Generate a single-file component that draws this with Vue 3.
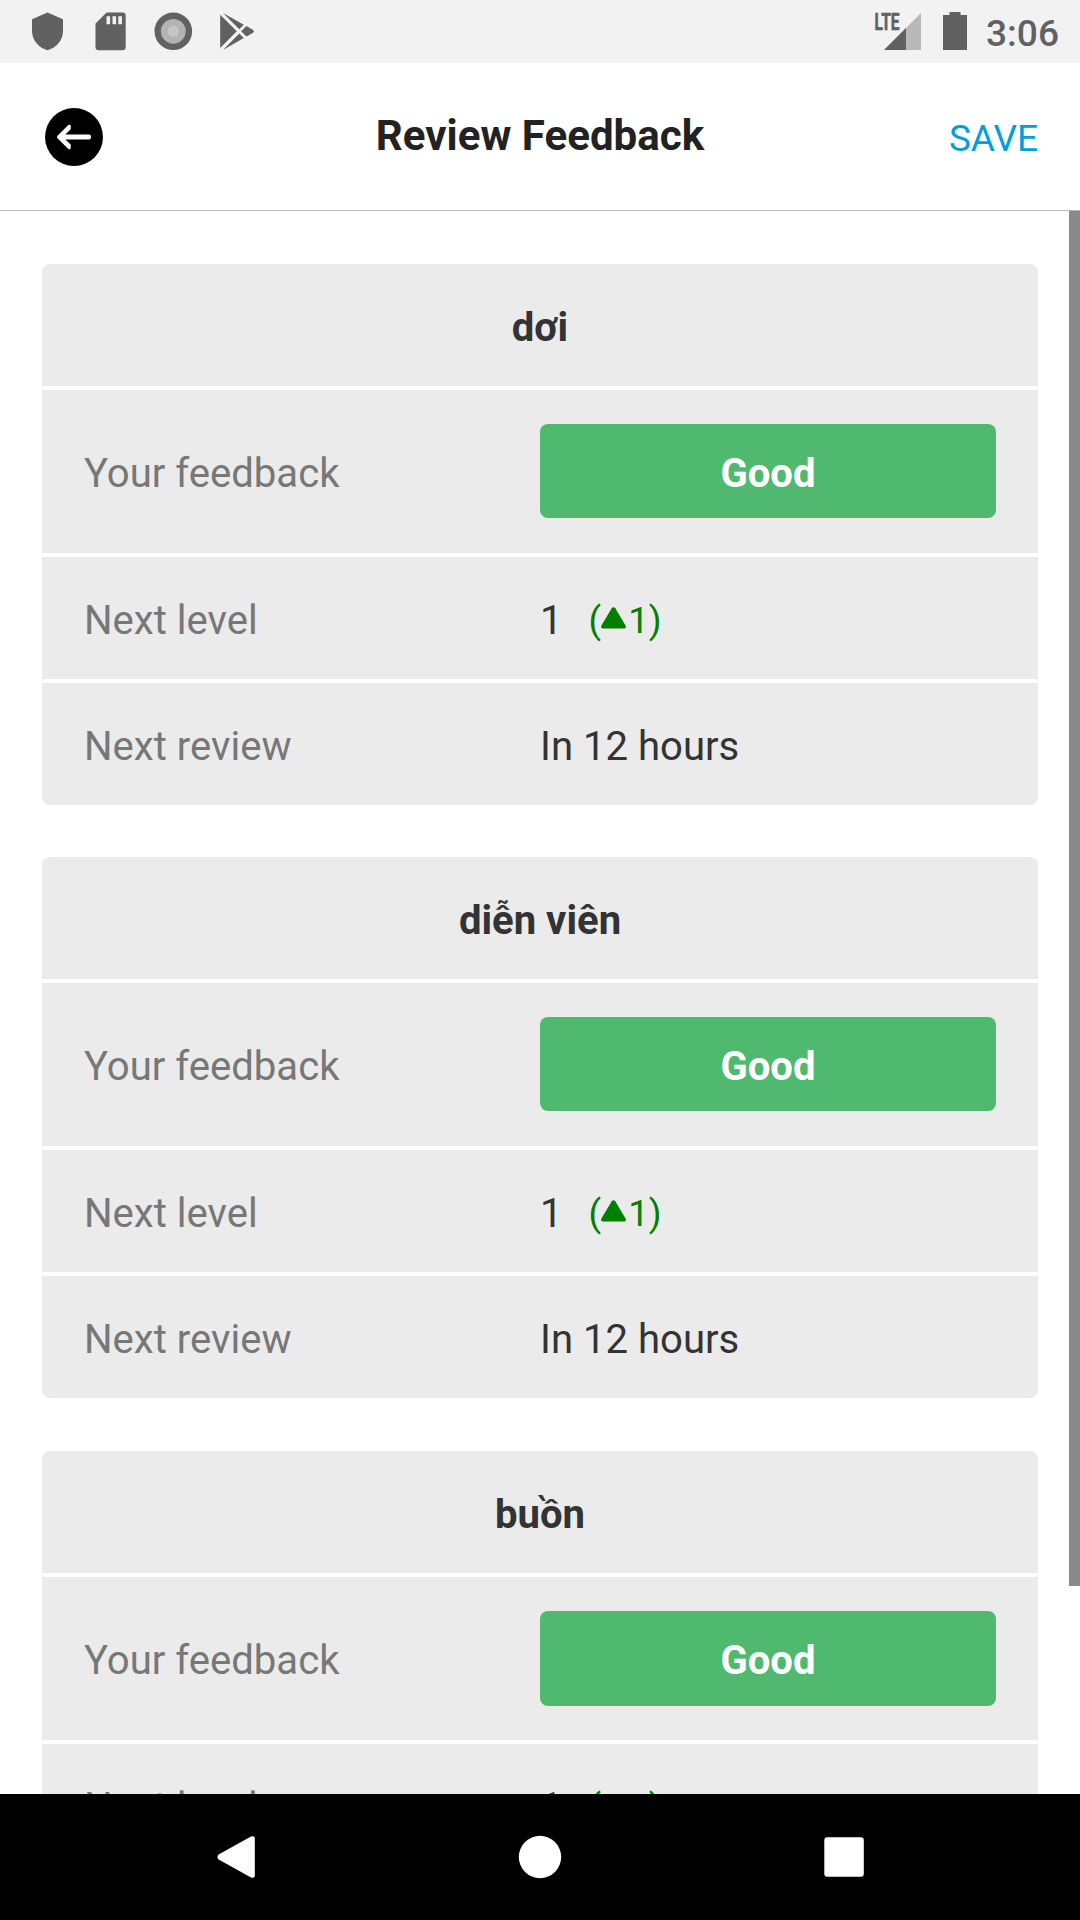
<script setup>
const cards = [
  { word: 'dơi', feedback: 'Good', level: 1, gain: 1, next: 'In 12 hours' },
  { word: 'diễn viên', feedback: 'Good', level: 1, gain: 1, next: 'In 12 hours' },
  { word: 'buồn', feedback: 'Good', level: 1, gain: 1, next: 'In 12 hours' },
]
</script>

<template>
  <div class="screen">
    <div class="status">
      <svg class="notifications" width="270" height="63" viewBox="0 0 270 63" fill="#616161">
        <path d="M47.5 12.5 63 19.3V31c0 9-6.500 16.800-15.500 19.300C38.500 47.800 32 40 32 31V19.300z" />
        <path fill-rule="evenodd" d="M106.500 12.500H122.500a3.200 3.200 0 0 1 3.200 3.200V47a3.200 3.200 0 0 1-3.200 3.200H98.700a3.200 3.200 0 0 1-3.200-3.200V23.500zM106.500 16.300v7.900h3.600v-7.900zM112.500 16.300v7.900h3.600v-7.900zM118.300 16.300v7.900h3.600v-7.900z" />
        <circle cx="173.300" cy="31.300" r="18.800" />
        <circle cx="173.300" cy="31.300" r="12.400" fill="#b3b3b3" />
        <circle cx="173.300" cy="31.300" r="5.700" fill="#c6c6c6" />
        <path d="M220.200 14.700 236.800 31.300 220.200 48z" />
        <path d="M223 12.900 243.800 24.700 239.300 29.300z" />
        <path d="M223 49.900 243.800 38 239.300 33.400z" />
        <path d="M246.400 26.100 252.800 29.800q2.200 1.500 0 3.100L246.400 36.600 241.200 31.300z" />
      </svg>
      <div class="system">
        <svg width="110" height="63" viewBox="870 0 110 63" fill="#616161">
          <path d="M921 13V50H884z" fill="#b9b9b9" />
          <path d="M906 28V50H884z" />
          <text x="874.500" y="30" class="lte" textLength="25" lengthAdjust="spacingAndGlyphs">LTE</text>
          <path d="M949.500 12H960.500V15H967V50H943V15H949.500z" />
        </svg>
        <span class="clock">3:06</span>
      </div>
    </div>

    <header class="header">
      <div class="side">
        <svg class="back" width="58" height="58" viewBox="0 0 58 58">
          <circle cx="29" cy="29" r="29" />
          <path fill="#fff" d="M12.500 27.700 23.300 17.100Q25.600 16.200 25.700 18V21.300L20.400 26.500H44.300Q46.100 26.700 46.100 29T44.300 31.500H20.400L25.700 36.600V40Q25.600 41.800 23.300 40.900L12.500 30.300Q11.300 29 12.500 27.700z" />
        </svg>
      </div>
      <h1 class="title">Review Feedback</h1>
      <div class="side end"><span class="save">SAVE</span></div>
    </header>

    <main class="content">
      <div class="list">
        <section v-for="card in cards" :key="card.word" class="card">
          <div class="row word">{{ card.word }}</div>
          <div class="row tall">
            <span class="label">Your feedback</span>
            <span class="button">{{ card.feedback }}</span>
          </div>
          <div class="row">
            <span class="label">Next level</span>
            <span class="value">
              {{ card.level }}
              <span class="gain">
                <span>(</span>
                <svg width="25" height="26" viewBox="0 0 25 26"><path d="M10.700 1.200Q12.500-.8 14.300 1.200L24.700 18.800Q25.500 21.300 23.300 21.500H1.700Q-.5 21.300.3 18.800z" /></svg>
                <span>{{ card.gain }})</span>
              </span>
            </span>
          </div>
          <div class="row">
            <span class="label">Next review</span>
            <span class="value">{{ card.next }}</span>
          </div>
        </section>
      </div>
      <div class="track"><div class="thumb"></div></div>
    </main>

    <nav class="nav">
      <svg width="304" height="126" viewBox="0 0 304 126"><path d="M134.200 60.700 167 42.600Q170.800 41.300 170.800 44.500V81.500Q170.800 84.700 167 83.400L134.200 65.300Q132.500 63 134.200 60.700z" /></svg>
      <svg width="304" height="126" viewBox="0 0 304 126"><circle cx="152" cy="63" r="21.200" /></svg>
      <svg width="304" height="126" viewBox="0 0 304 126"><rect x="132.300" y="43.300" width="39.500" height="39.500" rx="3" /></svg>
    </nav>
  </div>
</template>

<style>
body {
  margin: 0;
}
</style>

<style scoped>
.screen {
  display: flex;
  flex-direction: column;
  width: 1080px;
  height: 1920px;
  overflow: hidden;
  background: #fff;
  color: #333;
  font-family: Roboto, "Noto Sans", sans-serif;
  font-size: 40.1px;
}
svg {
  display: block;
  flex: none;
}
.status {
  display: flex;
  justify-content: space-between;
  flex: none;
  height: 63px;
  background: #f2f2f2;
  color: #616161;
}
.system {
  display: flex;
  padding-right: 21px;
}
.lte {
  font-size: 23px;
  font-weight: 700;
  stroke: #616161;
  stroke-width: 0.6px;
}
.clock {
  width: 79px;
  margin-top: 2px;
  font-size: 37.1px;
  font-weight: 500;
  line-height: 63px;
  text-align: right;
}
.header {
  display: flex;
  align-items: center;
  flex: none;
  box-sizing: border-box;
  height: 148px;
  padding: 0 42px 0 42px;
  border-bottom: 1px solid #b8b8b8;
}
.side {
  flex: 1 1 0;
}
.back {
  margin-left: 3px;
}
.end {
  text-align: right;
}
.title {
  margin: 0;
  color: #222;
  font-size: 42.1px;
  font-weight: 700;
  line-height: 50px;
  padding-bottom: 1px;
}
.save {
  display: block;
  padding-top: 5px;
  color: #009fdb;
  font-size: 37px;
  line-height: 44px;
}
.content {
  display: flex;
  flex: 1;
  min-height: 0;
  overflow: hidden;
}
.list {
  flex: 1;
  padding: 53px 31px 0 42px;
}
.card {
  display: flex;
  flex-direction: column;
  gap: 4px;
  margin-bottom: 52px;
  overflow: hidden;
  border-radius: 8px;
}
.card:nth-child(2) {
  margin-bottom: 53px;
}
.row {
  display: flex;
  align-items: center;
  box-sizing: border-box;
  height: 122px;
  padding: 4px 42px 0;
  background: #ebebeb;
}
.word {
  justify-content: center;
  font-weight: 700;
}
.tall {
  height: 163px;
  padding-top: 0;
}
.tall .label {
  padding-top: 4px;
}
.label,
.value,
.button {
  flex: 1 1 0;
}
.label {
  color: #777;
}
.value {
  display: flex;
  align-items: baseline;
}
.button {
  box-sizing: border-box;
  height: 94px;
  margin-bottom: 1px;
  padding-top: 4px;
  border-radius: 8px;
  background: #4fba6f;
  color: #fff;
  font-weight: 700;
  line-height: 92px;
  text-align: center;
}
.card:nth-child(3) .button {
  height: 95px;
}
.gain {
  display: flex;
  align-items: baseline;
  margin: 0 0 0 26px;
  color: #008000;
  font-size: 36.75px;
  position: relative;
  top: -1px;
}
.gain svg {
  margin-right: 2px;
  fill: #008000;
}
.track {
  width: 11px;
}
.thumb {
  height: 1375px;
  background: #8a8a8a;
}
.nav {
  display: flex;
  justify-content: center;
  flex: none;
  height: 126px;
  background: #000;
  fill: #fff;
}
</style>
